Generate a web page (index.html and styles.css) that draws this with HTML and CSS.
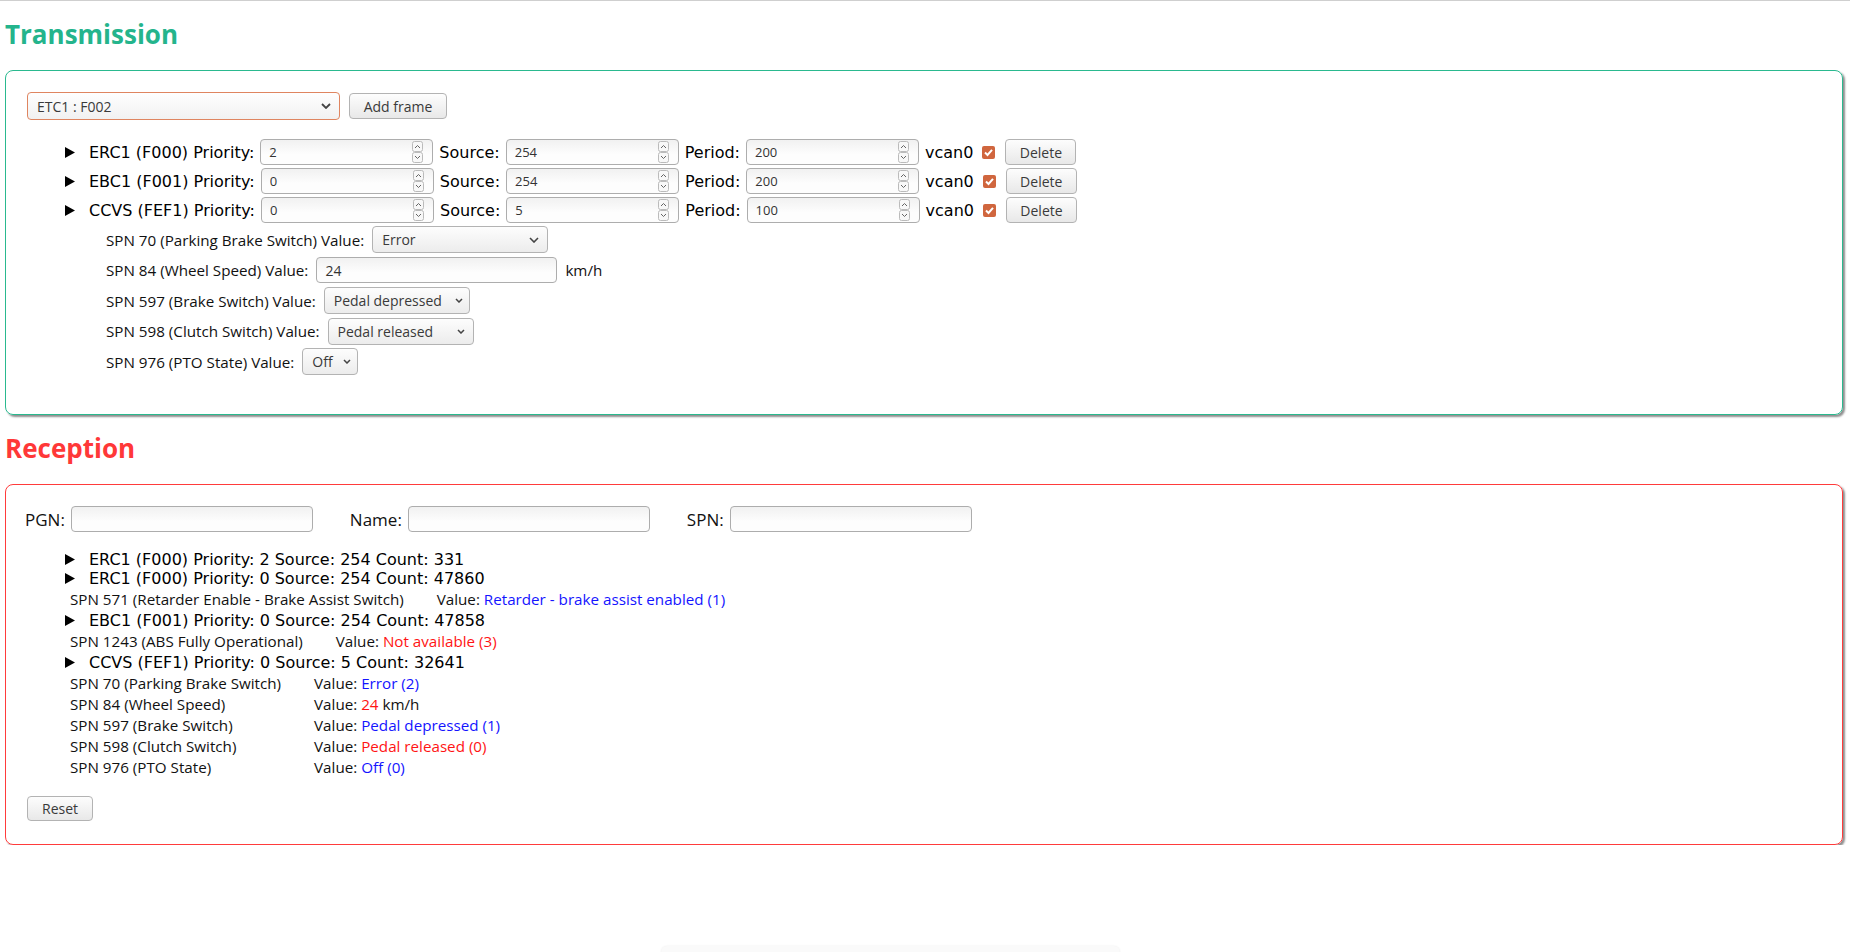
FILE: index.html
```html
<!DOCTYPE html>
<html lang="en">
<head>
<meta charset="utf-8">
<title>CAN frames</title>
<link rel="stylesheet" href="styles.css">
</head>
<body>
<h2 class="title tx-title">Transmission</h2>
<section class="panel tx-panel">
  <div class="add-row">
    <div class="select select-main"><span>ETC1 : F002</span><svg class="chev" width="10" height="6" viewBox="0 0 10 6"><path d="M1 1 L5 5 L9 1" fill="none" stroke="#444" stroke-width="1.8"/></svg></div>
    <button class="btn btn-add">Add frame</button>
  </div>
  <div class="frames">
    <div class="frame-row">
      <span class="marker"><svg width="10" height="11" viewBox="0 0 10 11"><polygon points="0,0 10,5.5 0,11" fill="#000"/></svg></span>
      <span>ERC1 (F000) Priority:</span>
      <div class="field num"><input value="2"><svg class="spin" width="11" height="22" viewBox="0 0 11 22"><rect x="0.5" y="0.5" width="10" height="10" rx="2" fill="#f8f8f8" stroke="#bbb"/><rect x="0.5" y="11.5" width="10" height="10" rx="2" fill="#f8f8f8" stroke="#bbb"/><path d="M3 7 L5.5 4.5 L8 7 M3 15 L5.5 17.5 L8 15" fill="none" stroke="#666"/></svg></div>
      <span>Source:</span>
      <div class="field num"><input value="254"><svg class="spin" width="11" height="22" viewBox="0 0 11 22"><rect x="0.5" y="0.5" width="10" height="10" rx="2" fill="#f8f8f8" stroke="#bbb"/><rect x="0.5" y="11.5" width="10" height="10" rx="2" fill="#f8f8f8" stroke="#bbb"/><path d="M3 7 L5.5 4.5 L8 7 M3 15 L5.5 17.5 L8 15" fill="none" stroke="#666"/></svg></div>
      <span>Period:</span>
      <div class="field num"><input value="200"><svg class="spin" width="11" height="22" viewBox="0 0 11 22"><rect x="0.5" y="0.5" width="10" height="10" rx="2" fill="#f8f8f8" stroke="#bbb"/><rect x="0.5" y="11.5" width="10" height="10" rx="2" fill="#f8f8f8" stroke="#bbb"/><path d="M3 7 L5.5 4.5 L8 7 M3 15 L5.5 17.5 L8 15" fill="none" stroke="#666"/></svg></div>
      <span>vcan0</span>
      <span class="check"><svg width="13" height="13" viewBox="0 0 13 13"><rect x="0" y="0" width="13" height="13" rx="2" fill="#d0663e"/><path d="M3 6.5 L5.5 9 L10 3.8" fill="none" stroke="#fff" stroke-width="2"/></svg></span>
      <button class="btn btn-del">Delete</button>
    </div>
    <div class="frame-row">
      <span class="marker"><svg width="10" height="11" viewBox="0 0 10 11"><polygon points="0,0 10,5.5 0,11" fill="#000"/></svg></span>
      <span>EBC1 (F001) Priority:</span>
      <div class="field num"><input value="0"><svg class="spin" width="11" height="22" viewBox="0 0 11 22"><rect x="0.5" y="0.5" width="10" height="10" rx="2" fill="#f8f8f8" stroke="#bbb"/><rect x="0.5" y="11.5" width="10" height="10" rx="2" fill="#f8f8f8" stroke="#bbb"/><path d="M3 7 L5.5 4.5 L8 7 M3 15 L5.5 17.5 L8 15" fill="none" stroke="#666"/></svg></div>
      <span>Source:</span>
      <div class="field num"><input value="254"><svg class="spin" width="11" height="22" viewBox="0 0 11 22"><rect x="0.5" y="0.5" width="10" height="10" rx="2" fill="#f8f8f8" stroke="#bbb"/><rect x="0.5" y="11.5" width="10" height="10" rx="2" fill="#f8f8f8" stroke="#bbb"/><path d="M3 7 L5.5 4.5 L8 7 M3 15 L5.5 17.5 L8 15" fill="none" stroke="#666"/></svg></div>
      <span>Period:</span>
      <div class="field num"><input value="200"><svg class="spin" width="11" height="22" viewBox="0 0 11 22"><rect x="0.5" y="0.5" width="10" height="10" rx="2" fill="#f8f8f8" stroke="#bbb"/><rect x="0.5" y="11.5" width="10" height="10" rx="2" fill="#f8f8f8" stroke="#bbb"/><path d="M3 7 L5.5 4.5 L8 7 M3 15 L5.5 17.5 L8 15" fill="none" stroke="#666"/></svg></div>
      <span>vcan0</span>
      <span class="check"><svg width="13" height="13" viewBox="0 0 13 13"><rect x="0" y="0" width="13" height="13" rx="2" fill="#d0663e"/><path d="M3 6.5 L5.5 9 L10 3.8" fill="none" stroke="#fff" stroke-width="2"/></svg></span>
      <button class="btn btn-del">Delete</button>
    </div>
    <div class="frame-row">
      <span class="marker"><svg width="10" height="11" viewBox="0 0 10 11"><polygon points="0,0 10,5.5 0,11" fill="#000"/></svg></span>
      <span>CCVS (FEF1) Priority:</span>
      <div class="field num"><input value="0"><svg class="spin" width="11" height="22" viewBox="0 0 11 22"><rect x="0.5" y="0.5" width="10" height="10" rx="2" fill="#f8f8f8" stroke="#bbb"/><rect x="0.5" y="11.5" width="10" height="10" rx="2" fill="#f8f8f8" stroke="#bbb"/><path d="M3 7 L5.5 4.5 L8 7 M3 15 L5.5 17.5 L8 15" fill="none" stroke="#666"/></svg></div>
      <span>Source:</span>
      <div class="field num"><input value="5"><svg class="spin" width="11" height="22" viewBox="0 0 11 22"><rect x="0.5" y="0.5" width="10" height="10" rx="2" fill="#f8f8f8" stroke="#bbb"/><rect x="0.5" y="11.5" width="10" height="10" rx="2" fill="#f8f8f8" stroke="#bbb"/><path d="M3 7 L5.5 4.5 L8 7 M3 15 L5.5 17.5 L8 15" fill="none" stroke="#666"/></svg></div>
      <span>Period:</span>
      <div class="field num"><input value="100"><svg class="spin" width="11" height="22" viewBox="0 0 11 22"><rect x="0.5" y="0.5" width="10" height="10" rx="2" fill="#f8f8f8" stroke="#bbb"/><rect x="0.5" y="11.5" width="10" height="10" rx="2" fill="#f8f8f8" stroke="#bbb"/><path d="M3 7 L5.5 4.5 L8 7 M3 15 L5.5 17.5 L8 15" fill="none" stroke="#666"/></svg></div>
      <span>vcan0</span>
      <span class="check"><svg width="13" height="13" viewBox="0 0 13 13"><rect x="0" y="0" width="13" height="13" rx="2" fill="#d0663e"/><path d="M3 6.5 L5.5 9 L10 3.8" fill="none" stroke="#fff" stroke-width="2"/></svg></span>
      <button class="btn btn-del">Delete</button>
    </div>
    <div class="spns">
      <div class="spn-row">
        <span class="spn-label">SPN 70 (Parking Brake Switch) Value:</span>
        <div class="select sel-176"><span>Error</span><svg class="chev" width="10" height="6" viewBox="0 0 10 6"><path d="M1 1 L5 5 L9 1" fill="none" stroke="#444" stroke-width="1.6"/></svg></div>
      </div>
      <div class="spn-row">
        <span class="spn-label">SPN 84 (Wheel Speed) Value:</span>
        <div class="field text w241"><input value="24"></div>
        <span class="spn-label">km/h</span>
      </div>
      <div class="spn-row">
        <span class="spn-label">SPN 597 (Brake Switch) Value:</span>
        <div class="select sel-146 tight"><span>Pedal depressed</span><svg class="chev" width="8" height="5" viewBox="0 0 8 5"><path d="M1 1 L4 4 L7 1" fill="none" stroke="#444" stroke-width="1.5"/></svg></div>
      </div>
      <div class="spn-row">
        <span class="spn-label">SPN 598 (Clutch Switch) Value:</span>
        <div class="select sel-146"><span>Pedal released</span><svg class="chev" width="8" height="5" viewBox="0 0 8 5"><path d="M1 1 L4 4 L7 1" fill="none" stroke="#444" stroke-width="1.5"/></svg></div>
      </div>
      <div class="spn-row">
        <span class="spn-label">SPN 976 (PTO State) Value:</span>
        <div class="select sel-56 tight"><span>Off</span><svg class="chev" width="8" height="5" viewBox="0 0 8 5"><path d="M1 1 L4 4 L7 1" fill="none" stroke="#444" stroke-width="1.5"/></svg></div>
      </div>
    </div>
  </div>
</section>

<h2 class="title rx-title">Reception</h2>
<section class="panel rx-panel">
  <div class="filters">
    <label class="filter"><span>PGN:</span><span class="field text w242"><input value=""></span></label>
    <label class="filter"><span>Name:</span><span class="field text w242"><input value=""></span></label>
    <label class="filter"><span>SPN:</span><span class="field text w242"><input value=""></span></label>
  </div>
  <div class="rx-list">
    <div class="rx-head"><span class="marker"><svg width="10" height="11" viewBox="0 0 10 11"><polygon points="0,0 10,5.5 0,11" fill="#000"/></svg></span><span>ERC1 (F000) Priority: 2 Source: 254 Count: 331</span></div>
    <div class="rx-head"><span class="marker"><svg width="10" height="11" viewBox="0 0 10 11"><polygon points="0,0 10,5.5 0,11" fill="#000"/></svg></span><span>ERC1 (F000) Priority: 0 Source: 254 Count: 47860</span></div>
    <table class="spn-table">
      <tr><td class="lbl">SPN 571 (Retarder Enable - Brake Assist Switch)</td><td>Value: <span class="blue">Retarder - brake assist enabled (1)</span></td></tr>
    </table>
    <div class="rx-head"><span class="marker"><svg width="10" height="11" viewBox="0 0 10 11"><polygon points="0,0 10,5.5 0,11" fill="#000"/></svg></span><span>EBC1 (F001) Priority: 0 Source: 254 Count: 47858</span></div>
    <table class="spn-table">
      <tr><td class="lbl">SPN 1243 (ABS Fully Operational)</td><td>Value: <span class="red">Not available (3)</span></td></tr>
    </table>
    <div class="rx-head"><span class="marker"><svg width="10" height="11" viewBox="0 0 10 11"><polygon points="0,0 10,5.5 0,11" fill="#000"/></svg></span><span>CCVS (FEF1) Priority: 0 Source: 5 Count: 32641</span></div>
    <table class="spn-table">
      <tr><td class="lbl">SPN 70 (Parking Brake Switch)</td><td>Value: <span class="blue">Error (2)</span></td></tr>
      <tr><td class="lbl">SPN 84 (Wheel Speed)</td><td>Value: <span class="red">24</span> km/h</td></tr>
      <tr><td class="lbl">SPN 597 (Brake Switch)</td><td>Value: <span class="blue">Pedal depressed (1)</span></td></tr>
      <tr><td class="lbl">SPN 598 (Clutch Switch)</td><td>Value: <span class="red">Pedal released (0)</span></td></tr>
      <tr><td class="lbl">SPN 976 (PTO State)</td><td>Value: <span class="blue">Off (0)</span></td></tr>
    </table>
  </div>
  <button class="btn btn-reset">Reset</button>
</section>
<div class="toast-ghost"></div>
</body>
</html>
```

FILE: styles.css
```css
html, body {
  margin: 0;
  background: #fff;
}
body {
  padding: 0 7px 0 5px;
  border-top: 1px solid #cfcfcf;
  font-family: "DejaVu Sans", sans-serif;
  font-size: 16px;
  color: #000;
}
.title {
  margin: 0 0 20px 0;
  padding-top: 17px;
  font-family: "Open Sans", sans-serif;
  font-weight: 700;
  font-size: 26px;
  line-height: 32px;
}
.tx-title { color: #24b48c; }
.rx-title { color: #ff3838; }

.panel {
  border-radius: 8px;
  box-shadow: 2px 2px 2px #8f8f8f;
  padding: 21px 21px 39px 21px;
}
.tx-panel { border: 1px solid #2ab98f; }
.rx-panel { border: 1px solid #ff3b3b; padding-bottom: 23px; }

/* widgets */
.select, .btn, .field {
  box-sizing: border-box;
  font-family: "Open Sans", sans-serif;
  color: #3a3a3a;
}
.select {
  display: inline-flex;
  align-items: center;
  justify-content: space-between;
  height: 27px;
  padding: 0 8px 0 9px;
  font-size: 14px;
  border: 1px solid #b3b3b3;
  border-radius: 4px;
  background: linear-gradient(#fdfdfd, #ececec);
}
.select.tight { padding-right: 6px; }
.select-main {
  width: 313px;
  height: 28px;
  border-color: #df8560;
  background: linear-gradient(#fefefe, #f1f1f1);
}
.sel-176 { width: 176px; }
.sel-146 { width: 146px; }
.sel-56 { width: 56px; }

.btn {
  height: 26px;
  padding: 0;
  font-size: 14px;
  border: 1px solid #b3b3b3;
  border-radius: 4px;
  background: linear-gradient(#fdfdfd, #e8e8e8);
}
.btn-add { width: 98px; margin-left: 9px; }
.btn-del { width: 71px; margin-left: 2px; }
.btn-reset { width: 66px; height: 25px; margin-top: 17px; }

.field {
  display: inline-flex;
  align-items: center;
  height: 26px;
  border: 1px solid #adadad;
  border-radius: 4px;
  background: linear-gradient(#f1f1f1, #fdfdfd 60%);
}
.field input {
  flex: 1;
  min-width: 0;
  border: 0;
  outline: 0;
  background: transparent;
  padding: 0;
  font-family: "Open Sans", sans-serif;
  color: #333;
}
.field.num {
  width: 173px;
  padding: 0 9px 0 8px;
}
.field.num input { font-size: 13px; }
.field.text { padding: 0 8px; }
.field.text input { font-size: 14px; }
.w241 { width: 241px; }
.w242 { width: 242px; }

.add-row {
  display: flex;
  align-items: center;
  height: 28px;
}

.frames {
  margin: 19px 0 0 38px;
}
.frame-row {
  display: flex;
  align-items: center;
  gap: 6px;
  height: 26px;
  margin-bottom: 3px;
  white-space: nowrap;
}
.marker {
  display: inline-flex;
  align-items: center;
  width: 18px;
  flex: none;
}
.check {
  display: inline-flex;
  margin: 0 2px 0 3px;
}

.spns {
  padding-left: 41px;
  margin-top: 1px;
  display: flex;
  flex-direction: column;
  gap: 3.5px;
}
.spn-row {
  display: flex;
  align-items: center;
  gap: 8px;
  height: 27px;
}
.spn-label {
  font-family: "Open Sans", sans-serif;
  font-size: 15.2px;
  color: #111;
}

/* reception */
.filters {
  display: flex;
  align-items: center;
  gap: 37px;
  height: 26px;
  margin-left: -2px;
}
.filter {
  display: flex;
  align-items: center;
  gap: 6px;
  font-family: "Open Sans", sans-serif;
  font-size: 17px;
  color: #111;
}
.rx-list {
  margin: 18px 0 0 38px;
}
.rx-head {
  display: flex;
  align-items: center;
  gap: 5px;
  height: 19px;
  line-height: 19px;
  font-size: 16px;
  white-space: nowrap;
}
.rx-head .marker { width: 19px; }
.spn-table {
  margin-left: 2px;
  border-collapse: separate;
  border-spacing: 2px;
  font-family: "Open Sans", sans-serif;
  font-size: 15.2px;
  line-height: 17px;
  color: #111;
}
.spn-table td {
  padding: 1px;
  white-space: nowrap;
}
.spn-table td.lbl { padding-right: 30px; }
.blue { color: #1414ff; }
.red { color: #ff1414; }

.toast-ghost {
  position: fixed;
  left: 661px;
  top: 946px;
  width: 459px;
  height: 20px;
  border-radius: 6px;
  background: #fafafa;
  box-shadow: 0 0 2px #ececec;
}
```
